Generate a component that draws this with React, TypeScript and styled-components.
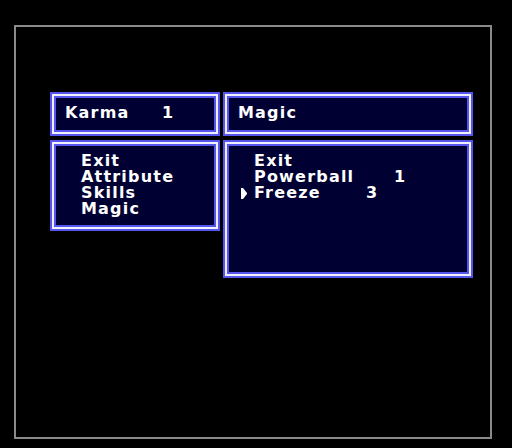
import React from "react";
import styled, { createGlobalStyle } from "styled-components";

const BLUE = "#5656ee";
const EDGE = "#f0f0ff";
const NAVY = "#000033";

const GlobalStyle = createGlobalStyle`
    html, body {
        margin: 0;
        padding: 0;
        background: #000;
    }
    body {
        font-family: "DejaVu Sans", "Liberation Sans", sans-serif;
    }
`;

interface MenuItem {
    label: string;
    count?: number;
    countAt?: number;
    selected?: boolean;
}

const sideMenu: MenuItem[] = [{ label: "Exit" }, { label: "Attribute" }, { label: "Skills" }, { label: "Magic" }];

const magicMenu: MenuItem[] = [
    { label: "Exit" },
    { label: "Powerball", count: 1, countAt: 140 },
    { label: "Freeze", count: 3, countAt: 112, selected: true },
];

const Cursor = () => (
    <svg width="6" height="11" viewBox="0 0 6 11">
        <polygon points="0,0 2,0 6,5 6,6 2,11 0,11" fill="#fff" />
    </svg>
);

const MenuList = ({ items }: { items: MenuItem[] }) => (
    <StyledList>
        {items.map((item) => (
            <StyledRow key={item.label}>
                <StyledCursorSlot>{item.selected && <Cursor />}</StyledCursorSlot>
                <StyledLabel $width={item.countAt}>{item.label}</StyledLabel>
                {item.count !== undefined && <StyledCount>{item.count}</StyledCount>}
            </StyledRow>
        ))}
    </StyledList>
);

const App = () => {
    return (
        <>
            <GlobalStyle />
            <StyledScreen>
                <StyledGrid>
                    <StyledHeader>
                        <StyledLabel $width={97}>Karma</StyledLabel>
                        <StyledCount>1</StyledCount>
                    </StyledHeader>
                    <StyledHeader>
                        <StyledLabel>Magic</StyledLabel>
                    </StyledHeader>
                    <StyledMenuBox $height={91}>
                        <MenuList items={sideMenu} />
                    </StyledMenuBox>
                    <StyledMenuBox $height={138}>
                        <MenuList items={magicMenu} />
                    </StyledMenuBox>
                </StyledGrid>
            </StyledScreen>
        </>
    );
};

const StyledScreen = styled.div`
    box-sizing: border-box;
    margin: 25px 0 0 14px;
    width: 478px;
    height: 414px;
    border: 2px solid #8a8a8a;
    padding: 65px 0 0 34px;
`;

const StyledGrid = styled.div`
    display: grid;
    grid-template-columns: 170px 250px;
    grid-template-rows: 44px auto;
    column-gap: 3px;
    row-gap: 4px;
    align-items: start;
`;

const StyledWindow = styled.div`
    box-sizing: border-box;
    background: ${NAVY};
    border: 2px solid ${BLUE};
    box-shadow: inset 0 0 0 2px ${EDGE}, inset 0 0 0 4px ${BLUE};
    color: #fff;
    font-size: 16px;
    font-weight: bold;
    letter-spacing: 1.2px;
    line-height: 16px;
`;

const StyledHeader = styled(StyledWindow)`
    height: 44px;
    display: flex;
    align-items: flex-start;
    padding: 11px 0 0 13px;
`;

const StyledMenuBox = styled(StyledWindow)<{ $height: number }>`
    height: ${(p) => p.$height}px;
    padding: 11px 0 0 16px;
`;

const StyledList = styled.div`
    display: flex;
    flex-direction: column;
`;

const StyledRow = styled.div`
    display: flex;
    align-items: center;
    height: 16px;
`;

const StyledCursorSlot = styled.div`
    width: 13px;
    display: flex;
    align-items: center;
`;

const StyledLabel = styled.span<{ $width?: number }>`
    display: inline-block;
    white-space: nowrap;
    ${(p) => (p.$width ? `width: ${p.$width}px;` : "")}
`;

const StyledCount = styled.span`
    display: inline-block;
`;

export default App;
